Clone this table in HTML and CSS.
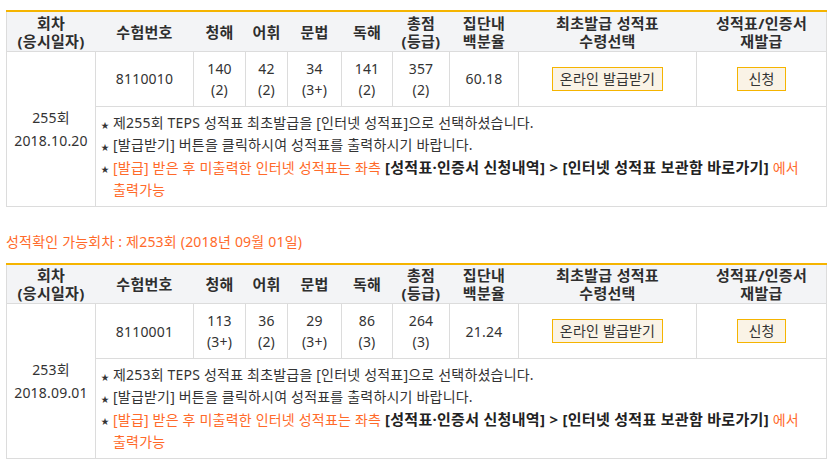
FILE: index.html
```html
<!DOCTYPE html>
<html lang="ko">
<head>
<meta charset="utf-8">
<link rel="stylesheet" href="styles.css">
</head>
<body>
<div class="page">
  <table class="score">
    <colgroup>
      <col class="c1"><col class="c2"><col class="c3"><col class="c4"><col class="c5"><col class="c6"><col class="c7"><col class="c8"><col class="c9"><col class="c10">
    </colgroup>
    <thead>
      <tr>
        <th>회차<br>(응시일자)</th>
        <th>수험번호</th>
        <th>청해</th>
        <th>어휘</th>
        <th>문법</th>
        <th>독해</th>
        <th>총점<br>(등급)</th>
        <th>집단내<br>백분율</th>
        <th>최초발급 성적표<br>수령선택</th>
        <th>성적표/인증서<br>재발급</th>
      </tr>
    </thead>
    <tbody>
      <tr class="data">
        <td rowspan="2" class="round">255회<br>2018.10.20</td>
        <td>8110010</td>
        <td>140<br>(2)</td>
        <td>42<br>(2)</td>
        <td>34<br>(3+)</td>
        <td>141<br>(2)</td>
        <td>357<br>(2)</td>
        <td>60.18</td>
        <td><span class="btn btn-wide">온라인 발급받기</span></td>
        <td><span class="btn">신청</span></td>
      </tr>
      <tr>
        <td colspan="9" class="notes">
          <ul>
            <li><span class="star">★</span><span>제255회 TEPS 성적표 최초발급을 [인터넷 성적표]으로 선택하셨습니다.</span></li>
            <li><span class="star">★</span><span>[발급받기] 버튼을 클릭하시여 성적표를 출력하시기 바랍니다.</span></li>
            <li class="warn"><span class="star">★</span><span><span>[발급] 받은 후 미출력한 인터넷 성적표는 좌측</span> <b>[성적표·인증서 신청내역] &gt; [인터넷 성적표 보관함 바로가기]</b> <span>에서</span> <span>출력가능</span></span></li>
          </ul>
        </td>
      </tr>
    </tbody>
  </table>

  <p class="avail">성적확인 가능회차 : 제253회 (2018년 09월 01일)</p>

  <table class="score">
    <colgroup>
      <col class="c1"><col class="c2"><col class="c3"><col class="c4"><col class="c5"><col class="c6"><col class="c7"><col class="c8"><col class="c9"><col class="c10">
    </colgroup>
    <thead>
      <tr>
        <th>회차<br>(응시일자)</th>
        <th>수험번호</th>
        <th>청해</th>
        <th>어휘</th>
        <th>문법</th>
        <th>독해</th>
        <th>총점<br>(등급)</th>
        <th>집단내<br>백분율</th>
        <th>최초발급 성적표<br>수령선택</th>
        <th>성적표/인증서<br>재발급</th>
      </tr>
    </thead>
    <tbody>
      <tr class="data">
        <td rowspan="2" class="round">253회<br>2018.09.01</td>
        <td>8110001</td>
        <td>113<br>(3+)</td>
        <td>36<br>(2)</td>
        <td>29<br>(3+)</td>
        <td>86<br>(3)</td>
        <td>264<br>(3)</td>
        <td>21.24</td>
        <td><span class="btn btn-wide">온라인 발급받기</span></td>
        <td><span class="btn">신청</span></td>
      </tr>
      <tr>
        <td colspan="9" class="notes">
          <ul>
            <li><span class="star">★</span><span>제253회 TEPS 성적표 최초발급을 [인터넷 성적표]으로 선택하셨습니다.</span></li>
            <li><span class="star">★</span><span>[발급받기] 버튼을 클릭하시여 성적표를 출력하시기 바랍니다.</span></li>
            <li class="warn"><span class="star">★</span><span><span>[발급] 받은 후 미출력한 인터넷 성적표는 좌측</span> <b>[성적표·인증서 신청내역] &gt; [인터넷 성적표 보관함 바로가기]</b> <span>에서</span> <span>출력가능</span></span></li>
          </ul>
        </td>
      </tr>
    </tbody>
  </table>
</div>
</body>
</html>
```

FILE: styles.css
```css
* { box-sizing: border-box; }
html, body { margin: 0; padding: 0; background: #fff; }
body {
  font-family: "Noto Sans", "Noto Sans CJK KR", sans-serif;
  font-size: 14px;
  letter-spacing: 0.2px;
  color: #333;
  word-break: keep-all;
}
.page { padding: 10px 5px 0 6px; }

.score {
  width: 820px;
  border-collapse: collapse;
  table-layout: fixed;
  border-top: 2px solid #f5b400;
}
.c1 { width: 89px; }
.c2 { width: 98px; }
.c3 { width: 52px; }
.c4 { width: 42px; }
.c5 { width: 54px; }
.c6 { width: 51px; }
.c7 { width: 57px; }
.c8 { width: 69px; }
.c9 { width: 178px; }
.c10 { width: 130px; }

.score th {
  background: #f3f4f6;
  font-weight: bold;
  font-size: 15px;
  letter-spacing: 0.3px;
  color: #2e2e2e;
  line-height: 18px;
  height: 40px;
  padding: 1px 0 0;
  text-align: center;
  border-bottom: 1px solid #dcdcdc;
  border-left: 1px solid #f3f4f6;
  border-right: 1px solid #f3f4f6;
}
.score th:first-child { border-left: 1px solid #dcdcdc; }
.score th:last-child { border-right: 1px solid #dcdcdc; }

.score td {
  border: 1px solid #dcdcdc;
  text-align: center;
  line-height: 21px;
  padding: 0;
}
.data td { height: 55px; }
.round { line-height: 23px !important; }

.btn {
  display: inline-block;
  height: 24px;
  line-height: 21px;
  padding: 0 10px;
  border: 1px solid #f5b400;
  background: #faf3e6;
  color: #333;
}
.btn-wide { width: 111px; padding: 0; }

.notes { text-align: left !important; padding: 5px 5px 5px 5px !important; }
.notes ul { list-style: none; margin: 0; padding: 0; }
.notes li { display: flex; line-height: 22px; }
.star {
  flex: none;
  width: 12px;
  padding-top: 2px;
  font-size: 8px;
  line-height: 22px;
  height: 22px;
  color: #333;
}
.warn { color: #ff6a2a; }
.warn b { color: #222; font-size: 15px; letter-spacing: 0.3px; }

.avail {
  margin: 25px 0 11px;
  line-height: 20px;
  color: #ff6a2a;
}
```
